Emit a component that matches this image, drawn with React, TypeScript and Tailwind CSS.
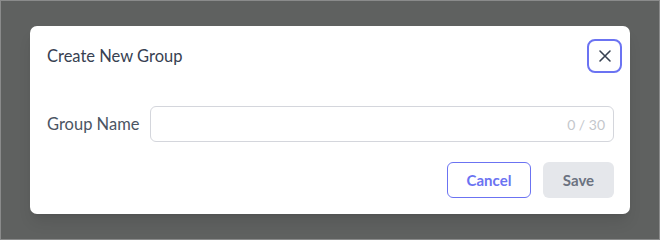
import React from 'react';

const App = () => {
  return (
    <div className="w-[660px] h-[240px] bg-[#5f6160] border border-[#8a8b8b] flex items-start justify-center pt-[25px] font-['Lato','Noto_Sans',sans-serif]">
      {/* Dialog */}
      <div className="w-[600px] h-[188px] bg-white rounded-[7px] shadow-lg flex flex-col">
        <div className="flex items-center justify-between pl-[17px] pr-[8px] pt-[13px]">
          <h2 className="text-[16.5px] text-[#374151]">Create New Group</h2>
          <button className="w-[35px] h-[34px] rounded-[8px] border-2 border-[#6b73f2] flex items-center justify-center text-[#374151]">
            <svg width="14" height="14" viewBox="0 0 14 14" fill="none" stroke="currentColor" strokeWidth="1.6" strokeLinecap="round">
              <path d="M2 2l10 10M12 2L2 12" />
            </svg>
          </button>
        </div>

        <div className="flex items-center pl-[17px] pr-[16px] mt-[33px]">
          <label className="text-[16.5px] text-[#4b5563] w-[103px] shrink-0">Group Name</label>
          <div className="flex-1 h-[36px] border border-[#d4d6dc] rounded-[6px] flex items-center justify-end px-[8px]">
            <span className="text-[14px] text-[#c4c7cc]">0 / 30</span>
          </div>
        </div>

        <div className="flex justify-end gap-[12px] pr-[16px] mt-[20px]">
          <button className="w-[84px] h-[36px] rounded-[6px] border border-[#6b73f2] text-[#6b73f2] text-[15px] font-bold">
            Cancel
          </button>
          <button className="w-[71px] h-[36px] rounded-[6px] bg-[#e5e7eb] text-[#6b7280] text-[15px] font-bold">
            Save
          </button>
        </div>
      </div>
    </div>
  );
};

export default App;
